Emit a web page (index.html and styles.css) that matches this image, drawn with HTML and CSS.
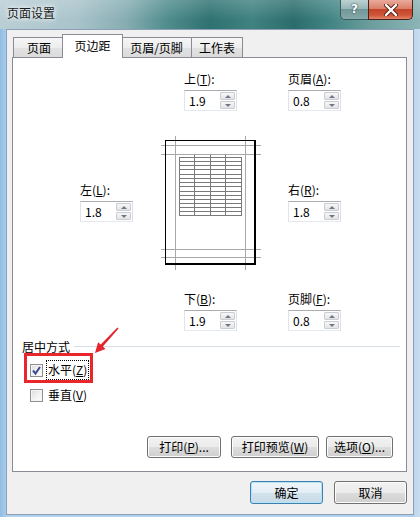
FILE: index.html
```
<!DOCTYPE html>
<html>
<head>
<meta charset="utf-8">
<link rel="stylesheet" href="styles.css">
</head>
<body>
<div class="window">
  <div class="titlebar">
    <div class="title">页面设置</div>
    <div class="caption">
      <div class="cap-help">?</div>
      <div class="cap-close">
        <svg width="14" height="12" viewBox="0 0 14 12">
          <path d="M2 1 L12 11 M12 1 L2 11" fill="none" stroke="#5a1f14" stroke-width="4.2" stroke-linecap="round"/>
          <path d="M2 1 L12 11 M12 1 L2 11" fill="none" stroke="#ffffff" stroke-width="2.4" stroke-linecap="round"/>
        </svg>
      </div>
    </div>
  </div>
  <div class="client">
    <div class="tabs">
      <div class="tab t1">页面</div>
      <div class="tab active t2">页边距</div>
      <div class="tab t3">页眉/页脚</div>
      <div class="tab t4">工作表</div>
    </div>
    <div class="panel">
      <div class="margins">
        <div class="field f-top">
          <div class="lbl">上(<u>T</u>):</div>
          <div class="spin"><span class="val">1.9</span><span class="arrows"><span class="ab"><i class="up"></i></span><span class="ab"><i class="dn"></i></span></span></div>
        </div>
        <div class="field f-header">
          <div class="lbl">页眉(<u>A</u>):</div>
          <div class="spin"><span class="val">0.8</span><span class="arrows"><span class="ab"><i class="up"></i></span><span class="ab"><i class="dn"></i></span></span></div>
        </div>
        <div class="field f-left">
          <div class="lbl">左(<u>L</u>):</div>
          <div class="spin"><span class="val">1.8</span><span class="arrows"><span class="ab"><i class="up"></i></span><span class="ab"><i class="dn"></i></span></span></div>
        </div>
        <svg class="preview" width="100" height="134" viewBox="0 0 100 134" shape-rendering="crispEdges">
          <rect x="4" y="4" width="90" height="124" fill="#ffffff"/>
          <g stroke="#a8a8a8" stroke-width="1">
            <line x1="14.5" y1="0" x2="14.5" y2="134"/>
            <line x1="84.5" y1="0" x2="84.5" y2="134"/>
            <line x1="0" y1="9.5" x2="100" y2="9.5"/>
            <line x1="0" y1="18.5" x2="100" y2="18.5"/>
            <line x1="0" y1="113.5" x2="100" y2="113.5"/>
            <line x1="0" y1="121.5" x2="100" y2="121.5"/>
          </g>
          <g stroke="#7a7a7a" stroke-width="1">
            <line x1="18.5" y1="21" x2="18.5" y2="80"/>
            <line x1="33.5" y1="19" x2="33.5" y2="80"/>
            <line x1="49.5" y1="19" x2="49.5" y2="80"/>
            <line x1="64.5" y1="19" x2="64.5" y2="80"/>
            <line x1="80.5" y1="21" x2="80.5" y2="80"/>
            <line x1="18" y1="21.5" x2="81" y2="21.5"/>
            <line x1="18" y1="25.5" x2="81" y2="25.5"/>
            <line x1="18" y1="29.5" x2="81" y2="29.5"/>
            <line x1="18" y1="33.5" x2="81" y2="33.5"/>
            <line x1="18" y1="38.5" x2="81" y2="38.5"/>
            <line x1="18" y1="42.5" x2="81" y2="42.5"/>
            <line x1="18" y1="46.5" x2="81" y2="46.5"/>
            <line x1="18" y1="50.5" x2="81" y2="50.5"/>
            <line x1="18" y1="55.5" x2="81" y2="55.5"/>
            <line x1="18" y1="59.5" x2="81" y2="59.5"/>
            <line x1="18" y1="63.5" x2="81" y2="63.5"/>
            <line x1="18" y1="67.5" x2="81" y2="67.5"/>
            <line x1="18" y1="71.5" x2="81" y2="71.5"/>
            <line x1="18" y1="75.5" x2="81" y2="75.5"/>
            <line x1="18" y1="79.5" x2="81" y2="79.5"/>
          </g>
          <g fill="#000000">
            <rect x="4" y="4" width="91" height="1"/>
            <rect x="4" y="4" width="1" height="125"/>
            <rect x="93" y="4" width="2" height="125"/>
            <rect x="4" y="127" width="91" height="2"/>
          </g>
        </svg>
        <div class="field f-right">
          <div class="lbl">右(<u>R</u>):</div>
          <div class="spin"><span class="val">1.8</span><span class="arrows"><span class="ab"><i class="up"></i></span><span class="ab"><i class="dn"></i></span></span></div>
        </div>
        <div class="field f-bottom">
          <div class="lbl">下(<u>B</u>):</div>
          <div class="spin"><span class="val">1.9</span><span class="arrows"><span class="ab"><i class="up"></i></span><span class="ab"><i class="dn"></i></span></span></div>
        </div>
        <div class="field f-footer">
          <div class="lbl">页脚(<u>F</u>):</div>
          <div class="spin"><span class="val">0.8</span><span class="arrows"><span class="ab"><i class="up"></i></span><span class="ab"><i class="dn"></i></span></span></div>
        </div>
      </div>

      <div class="center-head"><span>居中方式</span><span class="rule"></span></div>
      <div class="highlight">
        <span class="cb">
          <svg width="11" height="11" viewBox="0 0 11 11"><path d="M2 5.5 L4.5 8.5 L9 2" fill="none" stroke="#3b4d94" stroke-width="2"/></svg>
        </span>
        <span class="focus">水平(<u>Z</u>)</span>
      </div>
      <div class="cb-row">
        <span class="cb"></span>
        <span class="cb-text">垂直(<u>V</u>)</span>
      </div>

      <div class="panel-buttons">
        <div class="btn b-print">打印(<u>P</u>)...</div>
        <div class="btn b-preview">打印预览(<u>W</u>)</div>
        <div class="btn b-options">选项(<u>O</u>)...</div>
      </div>

      <svg class="arrow" width="34" height="34" viewBox="0 0 34 34">
        <polygon points="5,29 15.5,25 12.9,22.6 28.6,4.4 27.4,3.6 10.7,20.6 8.1,18.2" fill="#e3262e"/>
      </svg>
    </div>
    <div class="dialog-buttons">
      <div class="btn default">确定</div>
      <div class="btn">取消</div>
    </div>
  </div>
</div>
</body>
</html>
```
FILE: styles.css
```
* { box-sizing: border-box; }

body {
  margin: 0;
  width: 420px;
  height: 517px;
  overflow: hidden;
  font-family: "Noto Sans CJK SC", "Noto Sans", sans-serif;
  font-size: 12px;
  line-height: 16px;
  color: #000;
}

u { text-decoration: underline; text-underline-offset: 1px; }

.window {
  width: 420px;
  height: 517px;
  display: flex;
  flex-direction: column;
  background:
    linear-gradient(to right, #93bde3 0, #a7cbec 6px, rgba(0,0,0,0) 6px, rgba(0,0,0,0) 414px, #bcd6ee 414px, #c8def2 420px),
    linear-gradient(to bottom, #7ea9b6 0, #a3c6e4 120px, #b0d0ee 100%);
}

.titlebar {
  height: 29px;
  flex: none;
  display: flex;
  justify-content: space-between;
  align-items: flex-start;
  background:
    linear-gradient(to bottom, rgba(255,255,255,0.18), rgba(255,255,255,0) 70%),
    linear-gradient(to right, #b9ced5 0%, #a9c3cb 18%, #86adb2 30%, #4f8c8c 40%, #2e7271 50%, #3f8280 60%, #2b6d6c 70%, #3f8382 78%, #6a9d9c 88%, #8cb4b6 100%);
}

.title {
  padding: 5px 0 0 7px;
  font-size: 12px;
  color: #1a1a1a;
  text-shadow: 0 0 4px #ffffff, 0 0 8px rgba(255,255,255,0.9);
}

.caption {
  display: flex;
  margin-right: 7px;
}

.cap-help {
  width: 28px;
  height: 20px;
  border: 1px solid #3c5c5e;
  border-top: none;
  border-right: none;
  border-radius: 0 0 0 5px;
  background: linear-gradient(to bottom, #bcd1d2 0%, #98b7b8 45%, #729798 50%, #86a9aa 100%);
  color: #fff;
  font-family: "DejaVu Sans", sans-serif;
  font-weight: bold;
  font-size: 12px;
  line-height: 18px;
  text-align: center;
  text-shadow: 0 0 2px #2c4a4c, 0 0 1px #2c4a4c;
}

.cap-close {
  width: 45px;
  height: 20px;
  border: 1px solid #4a231c;
  border-top: none;
  border-radius: 0 0 5px 0;
  background: linear-gradient(to bottom, #e9aa9b 0%, #d98069 45%, #c4442a 50%, #cf5638 80%, #e3876a 100%);
  display: flex;
  align-items: center;
  justify-content: center;
}

.client {
  flex: 1;
  margin: 0 6px 2px 6px;
  border: 1px solid #8c9fb3;
  background: #f0f0f0;
  display: flex;
  flex-direction: column;
}

.tabs {
  display: flex;
  align-items: flex-end;
  height: 24px;
  margin-top: 4px;
  padding-left: 6px;
  flex: none;
}

.tab {
  height: 20px;
  margin-bottom: 1px;
  border: 1px solid #898c95;
  border-bottom: none;
  background: linear-gradient(to bottom, #f6f6f6 0%, #ededed 50%, #e2e2e2 51%, #dbdbdb 100%);
  display: flex;
  align-items: center;
  justify-content: center;
  font-size: 12px;
}

.t1 { width: 52px; }
.t3 { width: 71px; }
.t4 { width: 52px; margin-left: -1px; }

.tab.active {
  width: 61px;
  height: 24px;
  margin: 0 -2px 0 -3px;
  background: #ffffff;
  position: relative;
  z-index: 1;
  padding-bottom: 2px;
}

.panel {
  height: 415px;
  margin: -1px 6px 0 5px;
  border: 1px solid #898c95;
  background: #ffffff;
  display: flex;
  flex-direction: column;
  position: relative;
  flex: none;
}

.margins {
  display: grid;
  grid-template-columns: 67px 53px 28px 23px 53px 24px 27px 53px;
  margin-top: 13px;
}

.field {
  display: flex;
  flex-direction: column;
  gap: 3px;
}

.f-top { grid-column: 5; grid-row: 1; }
.f-header { grid-column: 8; grid-row: 1; }
.f-left { grid-column: 2; grid-row: 2; align-self: start; margin-top: 71px; }
.preview { grid-column: 4 / 7; grid-row: 2; margin-top: 25px; display: block; }
.f-right { grid-column: 8; grid-row: 2; align-self: start; margin-top: 71px; }
.f-bottom { grid-column: 5; grid-row: 3; margin-top: 21px; }
.f-footer { grid-column: 8; grid-row: 3; margin-top: 21px; }

.lbl { white-space: nowrap; }

.spin {
  width: 53px;
  height: 21px;
  border: 1px solid;
  border-color: #abadb3 #dbdfe6 #e3e9ef #e2e3ea;
  background: #fff;
  display: flex;
}

.val {
  flex: 1;
  padding-left: 4px;
  line-height: 19px;
}

.arrows {
  width: 16px;
  display: flex;
  flex-direction: column;
  padding: 1px 1px 1px 0;
  gap: 1px;
}

.ab {
  flex: 1;
  border: 1px solid #c9ccd2;
  border-radius: 1px;
  background: linear-gradient(to bottom, #f7f7f7, #e4e4e4);
  display: flex;
  align-items: center;
  justify-content: center;
}

.up {
  width: 0;
  height: 0;
  border-left: 3px solid transparent;
  border-right: 3px solid transparent;
  border-bottom: 3px solid #6e7889;
}

.dn {
  width: 0;
  height: 0;
  border-left: 3px solid transparent;
  border-right: 3px solid transparent;
  border-top: 3px solid #6e7889;
}

.center-head {
  display: flex;
  align-items: center;
  gap: 4px;
  margin: 9px 6px 0 9px;
  line-height: 14px;
}

.rule {
  flex: 1;
  height: 2px;
  border-top: 1px solid #d5dfe5;
  border-bottom: 1px solid #ffffff;
}

.highlight {
  align-self: flex-start;
  display: flex;
  align-items: center;
  gap: 3px;
  margin: -1px 0 0 11px;
  height: 30px;
  padding: 4px 1px 0 3px;
  border: 3px solid #e8262c;
}

.cb {
  width: 13px;
  height: 13px;
  flex: none;
  border: 1px solid #8e8f8f;
  background: linear-gradient(135deg, #dcdcdc 0%, #f4f4f4 60%, #ffffff 100%);
  box-shadow: inset 0 0 0 1px #f4f4f4;
  display: flex;
  align-items: center;
  justify-content: center;
}

.cb svg { display: block; }

.focus {
  border: 1px dotted #000;
  padding: 1px 1px;
  line-height: 16px;
}

.cb-row {
  display: flex;
  align-items: center;
  gap: 5px;
  margin: 4px 0 0 17px;
}

.panel-buttons {
  margin-top: auto;
  margin-bottom: 13px;
  display: flex;
  justify-content: flex-end;
  padding-right: 13px;
}

.btn {
  height: 22px;
  border: 1px solid #707070;
  border-radius: 3px;
  background: linear-gradient(to bottom, #f2f2f2 0%, #ebebeb 50%, #dddddd 51%, #cfcfcf 100%);
  box-shadow: inset 0 0 0 1px #fcfcfc;
  display: flex;
  align-items: center;
  justify-content: center;
  font-size: 12px;
  white-space: nowrap;
}

.b-print { width: 74px; }
.b-preview { width: 88px; margin-left: 10px; }
.b-options { width: 67px; margin-left: 7px; }

.arrow {
  position: absolute;
  left: 77px;
  top: 266px;
}

.dialog-buttons {
  margin-top: 9px;
  display: flex;
  justify-content: flex-end;
  gap: 11px;
  padding-right: 6px;
}

.dialog-buttons .btn {
  width: 73px;
  height: 23px;
}

.btn.default {
  border-color: #3c7fb1;
  box-shadow: inset 0 0 0 1px #b8e2f6;
  background: linear-gradient(to bottom, #eef6fa 0%, #e3eef4 50%, #d3e3ec 51%, #c6dae6 100%);
}
```
